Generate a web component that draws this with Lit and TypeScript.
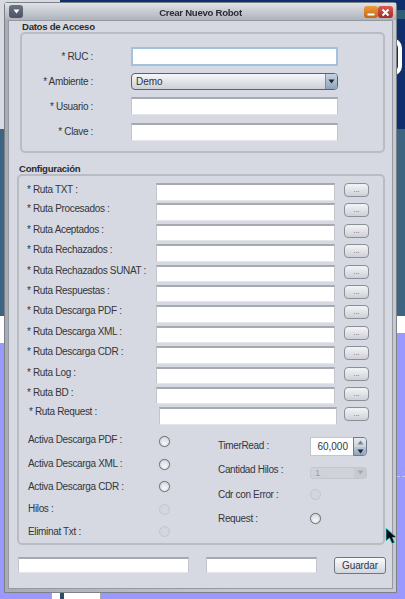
import { LitElement, html, css } from "lit";
import { customElement } from "lit/decorators.js";

const routes = [
  "* Ruta TXT :", "* Ruta Procesados :", "* Ruta Aceptados :", "* Ruta Rechazados :",
  "* Ruta Rechazados SUNAT :", "* Ruta Respuestas :", "* Ruta Descarga PDF :", "* Ruta Descarga XML :",
  "* Ruta Descarga CDR :", "* Ruta Log :", "* Ruta BD :",
];
const leftOpts: [string, boolean][] = [
  ["Activa Descarga PDF :", true], ["Activa Descarga XML :", true], ["Activa Descarga CDR :", true],
  ["Hilos :", false], ["Eliminat Txt :", false],
];

@customElement("app-root")
export class AppRoot extends LitElement {
  static styles = css`
    :host { display: block; width: 405px; height: 599px; position: relative; overflow: hidden;
      font-family: "Liberation Sans", Arial, sans-serif; font-size: 10px; letter-spacing: -0.34px; color: #33363c; background: #9999ff; }
    * { box-sizing: border-box; }
    .desk { height: 599px; display: flex; flex-direction: column; }
    .b-top { height: 129px; background: #0f2e6e; display: flex; position: relative; }
    .b-top .l { width: 60px; background: #d7dae0; }
    .b-mid { height: 187px; background: #3d6480; }
    .b-white { height: 27px; background: #fff; }
    .b-purple { flex: 1; background: #9999ff; position: relative; }
    .teal { position: absolute; left: 397px; top: 10px; width: 8px; height: 9px; background: #2f5f78; }
    .ring { position: absolute; left: 382px; top: 38px; width: 20px; height: 38px; border: 4px solid #fff; border-radius: 10px; }
    .patch { position: absolute; left: 397px; top: 333px; width: 8px; height: 10px; background: #9999ff; }
    .dash { position: absolute; left: 397px; top: 476px; width: 8px; border-top: 1px dashed #c6c6ff; }
    .stub { position: absolute; left: 51px; top: 593px; width: 50px; height: 6px; background: #fff; border-left: 1px solid #aaa; border-right: 1px solid #aaa; }
    .stub i { position: absolute; left: 8px; top: 0; width: 4px; height: 6px; background: #2d4d66; }

    .win { position: absolute; left: 4px; top: 2px; width: 393px; height: 591px; display: flex; flex-direction: column;
      border: 1px solid #7d8187; border-radius: 3px 3px 0 0; padding: 0 3px 3px; filter: blur(0.4px);
      background: linear-gradient(90deg, #a8adb5, #c6c9d0 60%); }
    .title { height: 17px; margin: 0 -3px; padding: 0 4px; display: flex; align-items: center; position: relative;
      background: linear-gradient(#dfe2e7, #aeb3bb); }
    .title b { position: absolute; left: 0; right: 0; text-align: center; font-size: 9.6px; letter-spacing: -0.28px; color: #2a2c30; top: 3px; line-height: 14px; }
    .menu { width: 14px; height: 13px; border-radius: 3px; background: linear-gradient(#6a7283, #4b5364); display: grid; place-items: center; }
    .ctl { position: absolute; top: 3px; height: 12px; border-radius: 3px; display: grid; place-items: center; }
    .min { left: 359px; width: 14px; background: linear-gradient(#ec9a3c, #bf6a12); }
    .close { left: 373px; width: 15px; background: linear-gradient(#d95a50, #a82a22); }
    .body { flex: 1; background: #d6d9e1; border: 1px solid #9599a0; display: flex; flex-direction: column; }
    .gt { font-weight: bold; font-size: 9.6px; letter-spacing: -0.28px; line-height: 10px; height: 10px; color: #2a2c30; white-space: nowrap; }
    .gt.a { margin: 1px 0 0 13px; }
    .gt.b { margin: 11px 0 0 10px; }
    .panel { border: 2px solid #b9bcc3; border-radius: 5px; }
    .panel.a { margin-left: 11px; width: 365px; height: 121px; padding: 13px 0 0 0; display: grid;
      grid-template-columns: 71px 207px; column-gap: 38px; grid-template-rows: 19px 17px 18px 19px; row-gap: 7px; align-items: center; justify-items: end; }
    .panel.a > :nth-child(even) { justify-self: stretch; }
    .panel.a > .clave { align-self: end; height: 18px; }
    .panel.b { margin-left: 8px; width: 368px; height: 371px; padding: 7px 0 0 8px; display: flex; flex-direction: column; }
    .inp { background: #fff; border: 1px solid #c3c6cc; border-top: 2px solid #a6a9af; border-bottom-color: #e4e6ea; height: 100%; }
    .inp.focus { border: 2px solid #a3c0dc; }
    .combo { height: 17px; border: 1px solid #5a6270; border-radius: 4px; display: flex; align-items: center;
      background: linear-gradient(#f6f7f9, #ccd0d8); padding-left: 4px; overflow: hidden; font-size: 10px; letter-spacing: 0; color: #2f3238; }
    .combo span { flex: 1; }
    .combo i { width: 12px; height: 100%; background: linear-gradient(#c5d3e2, #8fa4ba); display: grid; place-items: center; border-left: 1px solid #7d8ca0; }
    .routes { display: grid; grid-auto-rows: 17.5px; row-gap: 2.9px; }
    .route { display: grid; grid-template-columns: 129px 179px 25px; align-items: start; height: 17.5px; }
    .route label { line-height: 14px; white-space: nowrap; margin-top: -1px; }
    .route:first-child label { margin-top: 0; }
    .route .btn { margin-left: 9px; width: 25px; }
    .route.last { grid-template-columns: 132px 178px 25px; }
    .route.last label { padding-left: 2px; margin-top: -2px; }
    .route.last .btn { margin-left: 7px; }
    .btn { height: 14px; border: 1px solid #8b8f96; border-radius: 4px; background: linear-gradient(#f4f5f7, #cdd0d7);
      display: grid; place-items: center; color: #6a6d73; font-size: 8px; letter-spacing: 0; line-height: 10px; box-shadow: 0 1px 0 #eef0f3 inset; padding: 0; }
    .opts { display: flex; margin: 5.5px 0 0 1px; }
    .lcol { width: 144px; display: grid; grid-template-columns: 130.5px 11px; grid-auto-rows: 22.5px; align-items: center; }
    .lcol > label { white-space: nowrap; margin-top: -1px; }
    .rcol { margin-left: 46px; margin-top: 5px; width: 149px; display: grid; grid-template-columns: 92px 57px; grid-template-rows: 23px 23px 27px 20px; align-items: center; }
    .rcol > label { white-space: nowrap; }
    .rcol > label.timer { margin-top: -2px; }
    .lcol > label.first { margin-top: -4px; }
    .radio { width: 11px; height: 11px; border-radius: 50%; border: 1px solid #6c6f77;
      background: radial-gradient(circle at 50% 70%, #f6f7f9, #cfd2d9); box-shadow: 0 0 1px #9a9da5; justify-self: start; }
    .radio.off { border-color: #c2c5cb; box-shadow: none; background: #d3d6dd; }
    .spin { height: 19px; display: flex; background: #fff; border: 1px solid #c3c6cc; border-right: 0; border-radius: 0 4px 4px 0; }
    .spin span { flex: 1; text-align: right; padding-right: 5px; line-height: 17px; color: #33363c; font-size: 10px; letter-spacing: 0; }
    .spin .arrows { width: 14px; display: grid; grid-template-rows: 1fr 1fr; border: 1px solid #6d7a8c; border-radius: 0 4px 4px 0; overflow: hidden; margin: -1px 0; }
    .spin .arrows i { display: grid; place-items: center; }
    .spin .up { background: linear-gradient(#e6e9ee, #cdd2da); }
    .spin .dn { background: linear-gradient(#b8c8da, #8ea3ba); }
    .combo.dis { height: 12px; border-color: #c4c7cd; border-radius: 3px; background: #cfd2d9; color: #9a9da3; margin-top: 6px; font-size: 9.5px; }
    .combo.dis i { background: #c6cad1; border-left: 0; }
    .foot { display: grid; grid-template-columns: 171px 111px 52px; column-gap: 17px; height: 17px; margin: 12px 0 0 9px; }
    .foot .inp { height: 16px; }
    .guardar { height: 17px; border: 1px solid #71757c; border-radius: 3px; background: linear-gradient(#fafbfc, #d2d5dc); color: #33363c;
      font: 10px "Liberation Sans", Arial, sans-serif; letter-spacing: -0.1px; padding: 0; }
    .cursor { position: absolute; left: 383px; top: 525px; }
  `;

  private tri(c: string, up = false) {
    return html`<svg width="7" height="5" viewBox="0 0 7 5"><path d=${up ? "M3.5 0.5L6.5 4.5H0.5Z" : "M0.5 0.5H6.5L3.5 4.5Z"} fill=${c}></path></svg>`;
  }

  render() {
    return html`
      <div class="desk">
        <div class="b-top"><div class="l"></div></div>
        <div class="b-mid"></div>
        <div class="b-white"></div>
        <div class="b-purple"></div>
      </div>
      <div class="teal"></div><div class="ring"></div><div class="patch"></div><div class="dash"></div>
      <div class="stub"><i></i></div>

      <div class="win">
        <div class="title">
          <div class="menu">${this.tri("#fff")}</div>
          <b>Crear Nuevo Robot</b>
          <div class="ctl min"><svg width="8" height="8" viewBox="0 0 8 8"><rect x="0.5" y="5.5" width="7" height="2" fill="#fff"></rect></svg></div>
          <div class="ctl close"><svg width="9" height="9" viewBox="0 0 9 9"><path d="M1.5 1.5L7.5 7.5M7.5 1.5L1.5 7.5" stroke="#fff" stroke-width="2"></path></svg></div>
        </div>
        <div class="body">
          <div class="gt a">Datos de Acceso</div>
          <div class="panel a">
            <label>* RUC :</label><div class="inp focus"></div>
            <label>* Ambiente :</label>
            <div class="combo"><span>Demo</span><i>${this.tri("#1e2630")}</i></div>
            <label>* Usuario :</label><div class="inp"></div>
            <label>* Clave :</label><div class="inp clave"></div>
          </div>
          <div class="gt b">Configuración</div>
          <div class="panel b">
            <div class="routes">
              ${routes.map((r) => html`<div class="route"><label>${r}</label><div class="inp"></div><div class="btn">...</div></div>`)}
              <div class="route last"><label>* Ruta Request :</label><div class="inp"></div><div class="btn">...</div></div>
            </div>
            <div class="opts">
              <div class="lcol">
                ${leftOpts.map(([t, on], i) => html`<label class=${i === 0 ? "first" : ""}>${t}</label><div class="radio ${on ? "" : "off"}"></div>`)}
              </div>
              <div class="rcol">
                <label class="timer">TimerRead :</label>
                <div class="spin"><span>60,000</span><div class="arrows"><i class="up">${this.tri("#7c828c", true)}</i><i class="dn">${this.tri("#1e2630")}</i></div></div>
                <label>Cantidad Hilos :</label>
                <div class="combo dis"><span>1</span><i>${this.tri("#a5a9b0")}</i></div>
                <label>Cdr con Error :</label><div class="radio off"></div>
                <label>Request :</label><div class="radio"></div>
              </div>
            </div>
          </div>
          <div class="foot">
            <div class="inp"></div><div class="inp"></div>
            <button class="guardar">Guardar</button>
          </div>
        </div>
      </div>

      <svg class="cursor" width="16" height="22" viewBox="0 0 16 22">
        <path d="M3 3V16L6.5 13L9 18.5L11.5 17.5L9.5 12.5H13.5Z" fill="#0b0b12" stroke="#35e0e0" stroke-width="1" stroke-opacity="0.75"></path>
      </svg>
    `;
  }
}
